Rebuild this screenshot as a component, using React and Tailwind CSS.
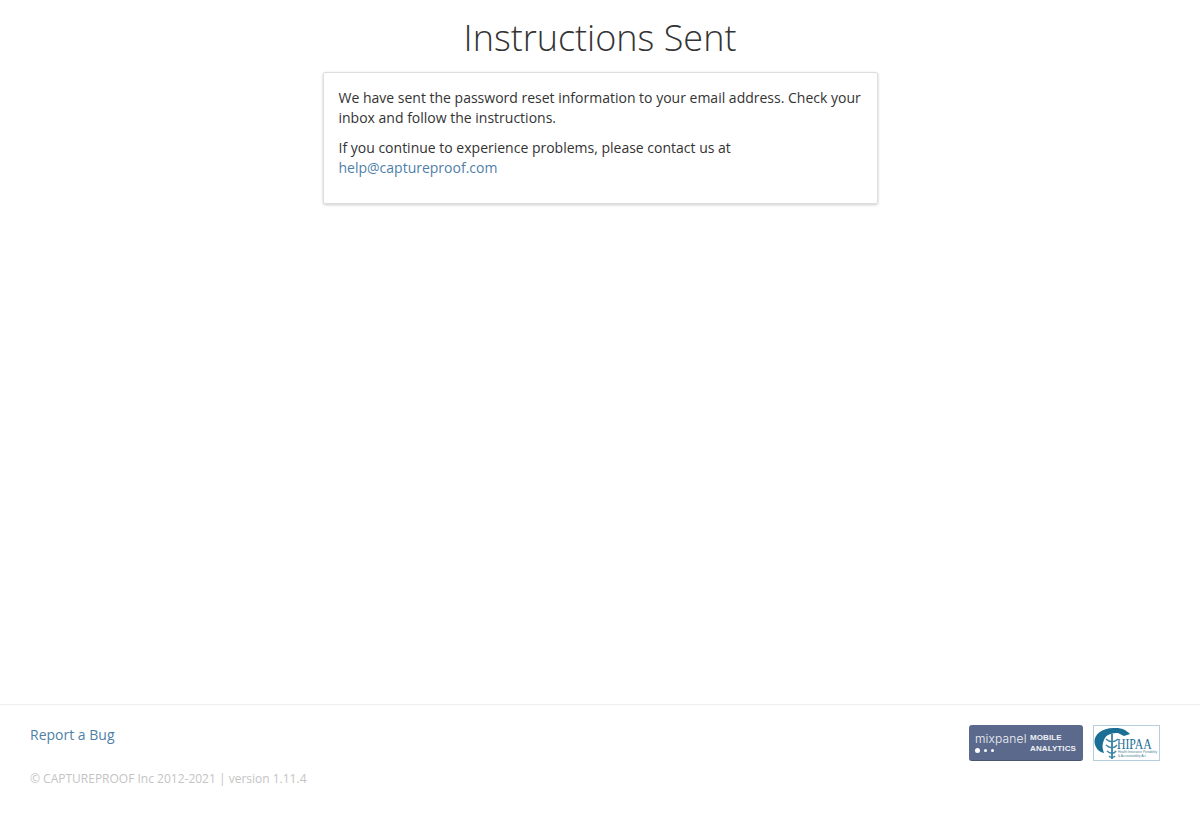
const FONT = "font-['Open_Sans',sans-serif]"

function MixpanelBadge() {
  return (
    <div className="flex h-[36px] w-[114px] items-center gap-[5px] rounded-[3px] border-b border-[#49556f] bg-[#5b6a8c] pl-[6px] text-white">
      <div className="flex w-[50px] flex-col gap-[3px]">
        <span className="font-['Inter',sans-serif] text-[12px] leading-[12px] font-light tracking-[0.15px] text-[#f2f3f7]">mixpanel</span>
        <div className="flex items-center gap-[4px]">
          <span className="h-[5px] w-[5px] rounded-full bg-white" />
          <span className="h-[3px] w-[3px] rounded-full bg-white" />
          <span className="h-[3px] w-[3px] rounded-full bg-white" />
        </div>
      </div>
      <div className="flex flex-col font-['Liberation_Sans',sans-serif] text-[8px] leading-[11px] font-bold tracking-[0.1px] text-[#eef0f5]">
        <span>MOBILE</span>
        <span>ANALYTICS</span>
      </div>
    </div>
  )
}

function HipaaBadge() {
  return (
    <div className="relative h-[36px] w-[67px] overflow-hidden border border-[#b5d0dc] bg-white">
      <svg width="65" height="34" viewBox="0 0 65 34" className="absolute left-0 top-0">
        <path d="M22 2C9 1 0 8 0.5 16C1 22 5 26 10 27C8 22 8 18 10 14C12 9 16 7 24 7L30 10L36 8C32 4 28 2 22 2Z" fill="#1b6f94" />
        <path d="M18 8V33" stroke="#1b6f94" strokeWidth="1.6" fill="none" />
        <path d="M12 13C16 17 21 16 24 13M12 19C16 23 21 22 23 19M13 25C16 28 20 28 22 25M15 30C17 32 19 32 21 30" stroke="#3f87a6" strokeWidth="1.4" fill="none" />
      </svg>
      <span className="absolute left-[23px] top-[12px] origin-left scale-x-[0.78] font-['Liberation_Serif',serif] text-[15px] leading-[12px] text-[#1b6f94]">HIPAA</span>
      <span className="absolute left-[24px] top-[24px] font-['Liberation_Sans',sans-serif] text-[3.2px] leading-[4px] whitespace-nowrap text-[#4a7f98]">Health Insurance Portability<br />&amp; Accountability Act</span>
    </div>
  )
}

export default function App() {
  return (
    <div className={`${FONT} flex min-h-[817px] flex-col bg-white text-[14px] leading-[20px] text-[#333333]`}>
      <main className="flex flex-1 flex-col items-center">
        <h1 className="mt-[18px] mb-[14px] text-[36px] leading-[40px] font-light text-[#333333]">Instructions Sent</h1>
        <div className="h-[132px] w-[555px] rounded-[2px] border border-[#dddddd] px-[15px] pt-[15px] shadow-[0_1px_3px_rgba(0,0,0,0.2)]">
          <p className="mb-[10px]">We have sent the password reset information to your email address. Check your inbox and follow the instructions.</p>
          <p>
            If you continue to experience problems, please contact us at<br />
            <a href="#" className="text-[#4f7fa8]">help@captureproof.com</a>
          </p>
        </div>
      </main>
      <footer className="flex h-[113px] justify-between border-t border-[#eeeeee] pt-[20px] pr-[40px] pl-[30px]">
        <div className="flex flex-col">
          <a href="#" className="text-[#4f7fa8]">Report a Bug</a>
          <p className="mt-[24px] text-[12px] leading-[20px] text-[#c4c4c4]">© CAPTUREPROOF Inc 2012-2021 | version 1.11.4</p>
        </div>
        <div className="flex items-start gap-[10px]">
          <MixpanelBadge />
          <HipaaBadge />
        </div>
      </footer>
    </div>
  )
}
